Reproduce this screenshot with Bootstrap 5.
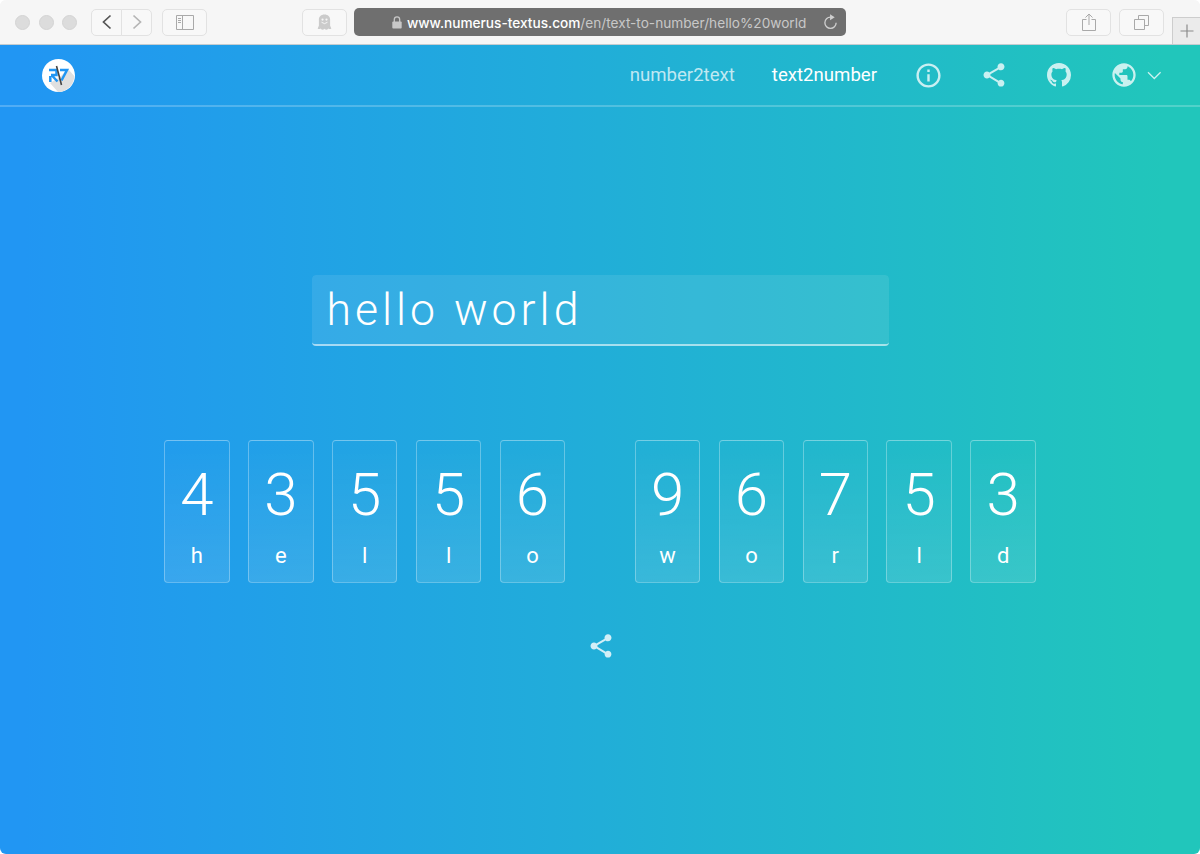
<!DOCTYPE html>
<html lang="en">
<head>
<meta charset="utf-8">
<meta name="viewport" content="width=device-width, initial-scale=1">
<title>text2number</title>
<link href="https://cdn.jsdelivr.net/npm/bootstrap@5.3.0/dist/css/bootstrap.min.css" rel="stylesheet">
<style>
body{background:#fff;font-family:Roboto,sans-serif;overflow:hidden}
.window{height:854px;border-radius:6px;background:#f6f6f6}
.toolbar{height:45px;background:#f6f6f6;border-bottom:1px solid #c4ccd0;font-family:Inter,sans-serif;padding-left:15px}
.dot{width:15px;height:15px;border-radius:50%;background:#dcdcdc;border:1px solid #d4d4d4}
.tool{height:27px;width:45px;border:1px solid #e2e2e2;border-radius:5px;color:#a9a9a9;background:#f8f8f8}
.tool-nav{width:31px}
.address{width:492px;height:28px;margin-left:7px;border-radius:5px;background:#6f6f6f;color:#c8c8c8;font-size:13.65px;padding:0 8px 0 38px}
.address b{font-weight:500;color:#fff}
.new-tab{width:28px;height:27px;border:1px solid #cdcdcd;border-width:1px 0 0 1px;background:#ebebeb;color:#8b8b8b}
.page{background:linear-gradient(90deg,#2196f3 2%,#21aed8 50%,#21c6bb 97%);color:#fff}
.site-nav{height:62px;border-bottom:2px solid rgba(255,255,255,.22);padding:0 38px 0 42px}
.site-nav .nav-link{font-size:18.6px;line-height:24px;padding:0;color:rgba(255,255,255,.72)}
.site-nav .nav-link.active{color:#fff}
.faded{color:rgba(255,255,255,.76)}
.text-entry{width:577px;height:71px;margin:168px auto 0;background:rgba(255,255,255,.09);background-clip:padding-box;border:0;border-bottom:2px solid rgba(255,255,255,.6);border-radius:4px;color:#fff;font-size:44.6px;font-weight:300;letter-spacing:4px;padding:1px 16px 1px 15px}
.text-entry:focus{background:rgba(255,255,255,.09);color:#fff;box-shadow:none}
.words{gap:69.6px;margin-top:94px}
.word{gap:18.4px}
.key{width:65.5px;height:143px;border:1px solid rgba(255,255,255,.3);border-radius:4px;background:linear-gradient(rgba(255,255,255,0),rgba(255,255,255,.11))}
.key-digit{font-size:60px;font-weight:300;line-height:60px;margin-top:24px}
.key-letter{font-size:22px;line-height:26px;margin-top:18px}
svg{display:block;flex:none}
</style>
</head>
<body>
<svg class="d-none" aria-hidden="true">
  <symbol id="share" viewBox="0 0 24 24"><path fill="currentColor" d="M18 16.08c-.76 0-1.44.3-1.96.77L8.91 12.7c.05-.23.09-.46.09-.7s-.04-.47-.09-.7l7.05-4.11c.54.5 1.25.81 2.04.81 1.66 0 3-1.34 3-3s-1.34-3-3-3-3 1.34-3 3c0 .24.04.47.09.7L8.04 9.81C7.5 9.31 6.79 9 6 9c-1.66 0-3 1.34-3 3s1.34 3 3 3c.79 0 1.5-.31 2.04-.81l7.12 4.16c-.05.21-.08.43-.08.65 0 1.61 1.31 2.92 2.92 2.92s2.92-1.31 2.92-2.92-1.31-2.92-2.92-2.92z"/></symbol>
</svg>
<div class="window d-flex flex-column overflow-hidden">
  <header class="toolbar d-flex align-items-center flex-shrink-0">
    <div class="d-flex" style="gap:8.500px"><span class="dot"></span><span class="dot"></span><span class="dot"></span></div>
    <div class="d-flex" style="margin-left:14px">
      <div class="tool tool-nav d-flex align-items-center justify-content-center rounded-end-0"><svg width="10" height="16" viewBox="0 0 10 16" fill="none" stroke="#555" stroke-width="1.7"><path d="M8.500 1.500 1.500 8l7 6.500"/></svg></div>
      <div class="tool tool-nav d-flex align-items-center justify-content-center rounded-start-0" style="margin-left:-1px"><svg width="10" height="16" viewBox="0 0 10 16" fill="none" stroke="#b5b5b5" stroke-width="1.7"><path d="M1.500 1.500 8.500 8l-7 6.500"/></svg></div>
    </div>
    <div class="tool d-flex align-items-center justify-content-center" style="margin-left:10px"><svg width="18" height="15" viewBox="0 0 18 15" fill="none" stroke="currentColor"><path d="M.5.5h17v14H.5zM6.500.5v14M2 3.500h3M2 5.500h3M2 7.500h3"/></svg></div>
    <div class="tool d-flex align-items-center justify-content-center" style="margin-left:95px"><svg width="15" height="17" viewBox="0 0 16 17"><path fill="#cbcbcb" d="M8 0C4.300 0 2 2.300 2 5.500V12L.7 15c1 .8 2.300.7 3.300-.2 1 1.700 2.400 1.900 4 .4 1.600 1.500 3 1.300 4-.4 1 .9 2.300 1 3.300.2L14 12V5.500C14 2.300 11.700 0 8 0z"/><circle cx="5.900" cy="5.300" r="1.200" fill="#f7f7f7"/><circle cx="10.100" cy="5.300" r="1.200" fill="#f7f7f7"/><path d="M4.800 8.200q3.200 3 6.400 0" fill="none" stroke="#f7f7f7"/></svg></div>
    <div class="address d-flex align-items-center">
      <svg width="10" height="13" viewBox="0 0 10 13"><path d="M2.300 6V3.500a2.700 2.700 0 0 1 5.400 0V6" fill="none" stroke="#c8c8c8" stroke-width="1.300"/><rect x=".3" y="5.400" width="9.400" height="7.100" rx="1" fill="#c8c8c8"/></svg>
      <span class="text-nowrap" style="margin-left:5px;padding-top:2px"><b>www.numerus-textus.com</b>/en/text-to-number/hello%20world</span>
      <svg class="ms-auto" width="15" height="16" viewBox="0 0 16 17"><path d="M8 3.300a6 6 0 1 0 6 6" fill="none" stroke="#d0d0d0" stroke-width="1.400"/><path d="M7.500.3 12.500 3.400 7.500 6.500z" fill="#d0d0d0"/></svg>
    </div>
    <div class="tool d-flex align-items-center justify-content-center ms-auto"><svg width="14" height="18" viewBox="0 0 14 18" fill="none" stroke="currentColor"><path d="M4.500 6.500h-4v11h13v-11h-4M7 12V1M3.500 4.500 7 1l3.500 3.500"/></svg></div>
    <div class="tool d-flex align-items-center justify-content-center" style="margin-left:8px"><svg width="15" height="15" viewBox="0 0 15 15" fill="none" stroke="currentColor"><path d="M.5 4.500h10v10H.5zM4.500 4V.5h10v10H11"/></svg></div>
    <div class="new-tab align-self-end d-flex align-items-center justify-content-center" style="margin-left:8px"><svg width="14" height="14" viewBox="0 0 14 14" stroke="currentColor" stroke-width="1.200"><path d="M7 .5v13M.5 7h13"/></svg></div>
  </header>
  <div class="page flex-grow-1">
    <nav class="site-nav d-flex align-items-center">
      <svg width="33" height="33" viewBox="0 0 33 33"><circle cx="16.500" cy="16.500" r="16.500" fill="#fff"/><path d="M26 10 32.300 17A16.500 16.500 0 0 1 16 33L8 24l10-6z" fill="#e0e0e0"/><path d="M7 11h7.500v5H9M8.300 23v-6M10 16.500l5.500 6M18 11h7l-5.500 10.500" fill="none" stroke="#2196f3" stroke-width="2.500"/><path d="m14.500 7 5 19" stroke="#444" stroke-width="1.600"/></svg>
      <div class="d-flex align-items-center ms-auto">
        <a class="nav-link" href="#">number2text</a>
        <a class="nav-link active" href="#" style="margin-left:37px">text2number</a>
        <svg class="faded" style="margin-left:37px" width="29" height="29" viewBox="0 0 24 24"><path fill="currentColor" d="M11 17h2v-6h-2v6zm1-15C6.480 2 2 6.480 2 12s4.480 10 10 10 10-4.480 10-10S17.520 2 12 2zm0 18c-4.410 0-8-3.590-8-8s3.590-8 8-8 8 3.590 8 8-3.590 8-8 8zM11 9h2V7h-2v2z"/></svg>
        <svg class="faded" style="margin-left:37px" width="28" height="28"><use href="#share"/></svg>
        <svg class="faded" style="margin-left:39px" width="24" height="24" viewBox="0 0 16 16"><path fill="currentColor" d="M8 0C3.580 0 0 3.580 0 8c0 3.540 2.290 6.530 5.470 7.590.4.070.55-.17.55-.38 0-.19-.01-.82-.01-1.490-2.010.37-2.530-.49-2.690-.94-.09-.23-.48-.94-.82-1.130-.28-.15-.68-.52-.01-.53.63-.01 1.080.58 1.230.82.72 1.210 1.870.87 2.330.66.070-.52.28-.87.51-1.070-1.780-.2-3.640-.89-3.640-3.950 0-.87.31-1.590.82-2.150-.08-.2-.36-1.020.08-2.120 0 0 .67-.21 2.200.82.64-.18 1.320-.27 2-.27s1.360.09 2 .27c1.530-1.040 2.200-.82 2.200-.82.44 1.100.16 1.920.08 2.120.51.56.82 1.270.82 2.150 0 3.070-1.870 3.750-3.650 3.950.29.25.54.73.54 1.480 0 1.070-.01 1.930-.01 2.200 0 .21.15.46.55.38A8.010 8.010 0 0 0 16 8c0-4.420-3.580-8-8-8z"/></svg>
        <svg class="faded" style="margin-left:39px" width="28" height="28" viewBox="0 0 24 24"><path fill="currentColor" d="M12 2C6.480 2 2 6.480 2 12s4.480 10 10 10 10-4.480 10-10S17.520 2 12 2zm-1 17.930c-3.950-.49-7-3.850-7-7.930 0-.62.080-1.210.21-1.790L9 15v1c0 1.100.9 2 2 2v1.930zm6.900-2.540c-.26-.81-1-1.390-1.900-1.390h-1v-3c0-.55-.45-1-1-1H8v-2h2c.55 0 1-.45 1-1V7h2c1.100 0 2-.9 2-2v-.41c2.930 1.190 5 4.060 5 7.410 0 2.080-.8 3.970-2.100 5.390z"/></svg>
        <svg class="faded" style="margin-left:9px" width="15" height="9" viewBox="0 0 15 9" fill="none" stroke="currentColor" stroke-width="1.300"><path d="m1 1.200 6.300 6.300 6.300-6.300"/></svg>
      </div>
    </nav>
    <main>
      <input class="text-entry form-control" type="text" value="hello world" aria-label="Text" spellcheck="false">
      <div class="words d-flex justify-content-center text-center">
        <div class="word d-flex">
          <div class="key"><div class="key-digit">4</div><div class="key-letter">h</div></div>
          <div class="key"><div class="key-digit">3</div><div class="key-letter">e</div></div>
          <div class="key"><div class="key-digit">5</div><div class="key-letter">l</div></div>
          <div class="key"><div class="key-digit">5</div><div class="key-letter">l</div></div>
          <div class="key"><div class="key-digit">6</div><div class="key-letter">o</div></div>
        </div>
        <div class="word d-flex">
          <div class="key"><div class="key-digit">9</div><div class="key-letter">w</div></div>
          <div class="key"><div class="key-digit">6</div><div class="key-letter">o</div></div>
          <div class="key"><div class="key-digit">7</div><div class="key-letter">r</div></div>
          <div class="key"><div class="key-digit">5</div><div class="key-letter">l</div></div>
          <div class="key"><div class="key-digit">3</div><div class="key-letter">d</div></div>
        </div>
      </div>
      <div class="d-flex justify-content-center" style="margin-top:49px;padding-left:2px;color:rgba(255,255,255,.8)"><svg width="28" height="28"><use href="#share"/></svg></div>
    </main>
  </div>
</div>
<script src="https://cdn.jsdelivr.net/npm/bootstrap@5.3.0/dist/js/bootstrap.bundle.min.js"></script>
</body>
</html>
